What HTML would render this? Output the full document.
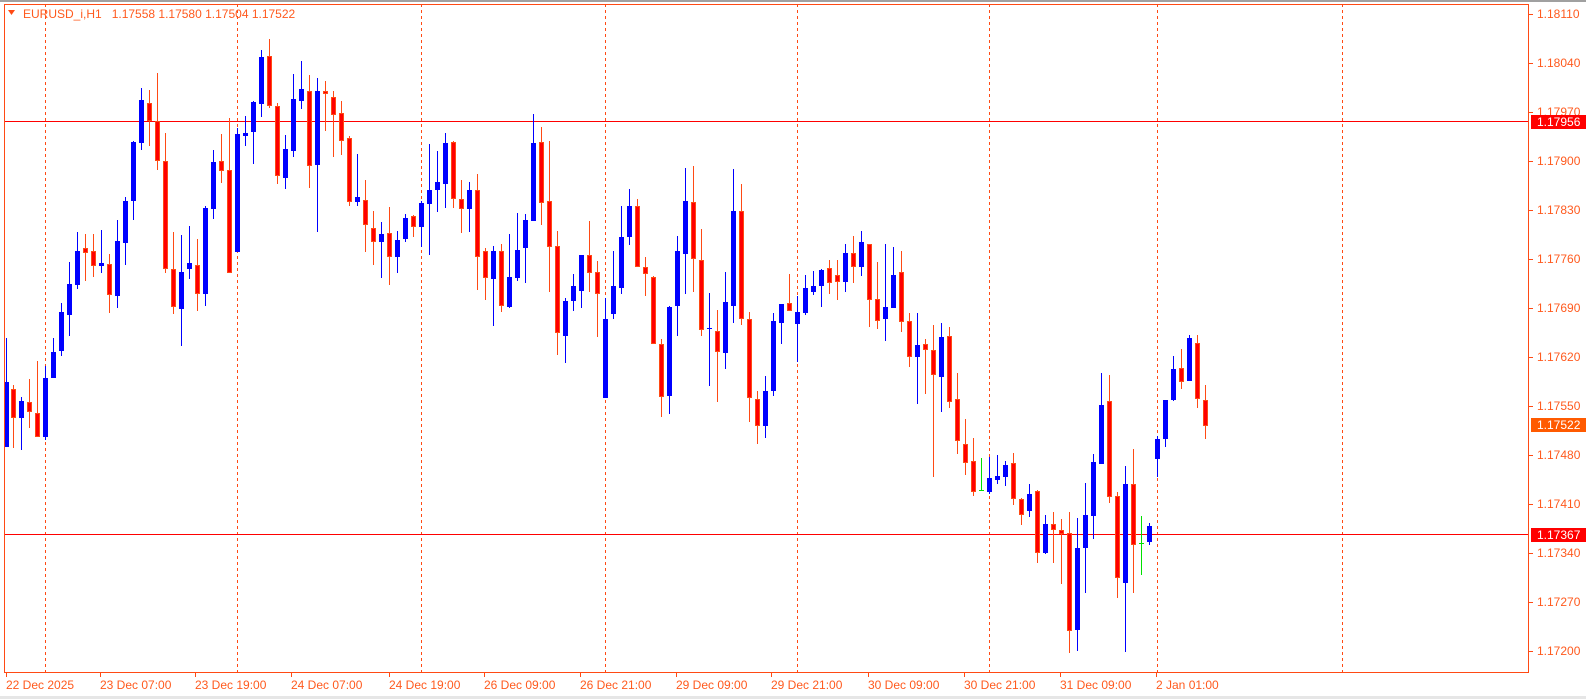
<!DOCTYPE html>
<html><head><meta charset="utf-8"><style>
html,body{margin:0;padding:0;background:#fff;width:1586px;height:699px;overflow:hidden}
svg{display:block}
text{font-family:"Liberation Sans",sans-serif;font-size:12px;fill:#ff5a1e}
</style></head><body>
<svg id="s" width="1586" height="699" xmlns="http://www.w3.org/2000/svg">
<rect x="0" y="0" width="1586" height="699" fill="#fff"/>
<rect x="0" y="0" width="1586" height="2" fill="#a0a0a0"/>
<rect x="0" y="696" width="1586" height="3" fill="#e6e6e6"/>
<g id="grid" stroke="#ff4a14" stroke-width="1" stroke-dasharray="3,3">
<line x1="45.5" y1="4" x2="45.5" y2="673"/>
<line x1="237.5" y1="4" x2="237.5" y2="673"/>
<line x1="421.5" y1="4" x2="421.5" y2="673"/>
<line x1="605.5" y1="4" x2="605.5" y2="673"/>
<line x1="797.5" y1="4" x2="797.5" y2="673"/>
<line x1="989.5" y1="4" x2="989.5" y2="673"/>
<line x1="1157.5" y1="4" x2="1157.5" y2="673"/>
<line x1="1342.5" y1="4" x2="1342.5" y2="673"/>
</g>
<line x1="4" y1="121.5" x2="1529" y2="121.5" stroke="#ff0000"/>
<line x1="4" y1="534.5" x2="1529" y2="534.5" stroke="#ff0000"/>
<g id="c"></g>
<rect x="4.5" y="4.5" width="1524" height="668" fill="none" stroke="#ff4a14"/>
<g stroke="#ff4a14" id="ticks"></g>
<path d="M8 10 L15 10 L11.5 15 Z" fill="#ff4a14"/>
<text x="23" y="18">EURUSD_i,H1&#160;&#160;&#160;1.17558&#160;1.17580&#160;1.17504&#160;1.17522</text>
<g id="pl">
<text x="1537" y="18">1.18110</text>
<text x="1537" y="67">1.18040</text>
<text x="1537" y="116">1.17970</text>
<text x="1537" y="165">1.17900</text>
<text x="1537" y="214">1.17830</text>
<text x="1537" y="263">1.17760</text>
<text x="1537" y="312">1.17690</text>
<text x="1537" y="361">1.17620</text>
<text x="1537" y="410">1.17550</text>
<text x="1537" y="459">1.17480</text>
<text x="1537" y="508">1.17410</text>
<text x="1537" y="557">1.17340</text>
<text x="1537" y="606">1.17270</text>
<text x="1537" y="655">1.17200</text>
</g>
<rect x="1531" y="115" width="55" height="14" fill="#ff0000"/>
<text x="1537" y="126" style="fill:#fff">1.17956</text>
<rect x="1531" y="418" width="55" height="14" fill="#ff5a00"/>
<text x="1537" y="429" style="fill:#fff">1.17522</text>
<rect x="1531" y="528" width="55" height="14" fill="#ff0000"/>
<text x="1537" y="539" style="fill:#fff">1.17367</text>
<g>
<text x="6" y="689">22 Dec 2025</text>
<text x="100" y="689">23 Dec 07:00</text>
<text x="195" y="689">23 Dec 19:00</text>
<text x="291" y="689">24 Dec 07:00</text>
<text x="389" y="689">24 Dec 19:00</text>
<text x="484" y="689">26 Dec 09:00</text>
<text x="580" y="689">26 Dec 21:00</text>
<text x="676" y="689">29 Dec 09:00</text>
<text x="771" y="689">29 Dec 21:00</text>
<text x="868" y="689">30 Dec 09:00</text>
<text x="964" y="689">30 Dec 21:00</text>
<text x="1060" y="689">31 Dec 09:00</text>
<text x="1156" y="689">2 Jan 01:00</text>
</g>
</svg>
<script>
var D=[
[6,'b',382,447,338,447],[13,'r',389,418,385,448],[21,'b',401,418,397,450],[29,'r',402,412,379,428],[37,'r',413,437,361,437],
[45,'b',378,437,366,440],[53,'b',352,378,338,378],[61,'b',312,351,303,356],[69,'b',284,315,262,336],[77,'b',251,285,232,289],
[85,'r',248,253,234,281],[93,'r',251,266,234,277],[101,'b',263,266,230,273],[109,'r',264,295,254,313],[117,'b',241,296,220,308],
[125,'b',201,243,197,265],[133,'b',142,201,141,220],[141,'b',100,143,88,150],[149,'r',103,121,90,146],[157,'r',121,161,73,170],
[165,'r',161,269,133,273],[173,'r',269,307,232,314],[181,'b',272,309,235,346],[189,'b',263,269,226,279],[197,'r',265,294,239,311],
[205,'b',208,294,206,306],[213,'b',162,209,150,219],[221,'r',161,171,134,183],[229,'r',170,273,118,273],[237,'b',134,252,128,252],
[245,'b',133,136,116,146],[253,'b',102,132,101,164],[261,'b',57,104,50,117],[269,'r',56,106,39,108],[277,'r',106,176,103,184],
[285,'b',149,178,135,189],[293,'b',99,151,74,157],[301,'b',89,101,61,109],[309,'r',91,166,75,188],[317,'b',91,165,78,232],
[325,'r',91,94,81,131],[333,'r',97,115,91,157],[341,'r',113,141,101,155],[349,'r',138,202,136,206],[357,'b',197,202,154,206],
[365,'r',200,225,180,252],[373,'r',228,242,211,265],[381,'b',234,242,222,278],[389,'r',233,257,207,285],[397,'b',240,257,231,273],
[405,'b',218,239,214,242],[413,'r',216,227,215,237],[421,'b',203,227,201,247],[429,'b',190,204,144,255],[437,'b',182,190,151,212],
[445,'b',143,184,133,208],[453,'r',142,199,141,208],[461,'r',199,209,180,233],[469,'b',190,209,182,232],[477,'r',190,257,174,290],
[485,'r',251,278,248,300],[493,'b',251,279,246,326],[501,'r',251,306,244,312],[509,'b',277,307,234,308],[517,'b',250,278,213,281],
[525,'b',220,248,214,283],[533,'b',143,221,114,221],[541,'r',142,203,127,225],[549,'r',201,247,141,292],[557,'r',246,333,231,355],
[565,'b',301,336,298,363],[573,'b',286,301,274,311],[581,'b',255,291,255,308],[589,'r',255,273,221,292],[597,'r',272,294,261,337],
[605,'b',319,398,298,398],[613,'b',286,314,251,319],[621,'b',237,288,206,294],[629,'b',206,237,189,245],[637,'r',206,267,199,267],
[645,'r',267,274,257,296],[653,'r',277,344,276,344],[661,'r',344,397,339,417],[669,'b',307,396,306,414],[677,'b',251,306,236,336],
[685,'b',201,254,168,294],[693,'r',202,259,166,292],[701,'r',260,330,229,336],[709,'b',328,329,293,386],[717,'r',331,352,310,402],
[725,'b',302,353,272,369],[733,'b',211,306,169,323],[741,'r',211,319,184,325],[749,'r',319,398,312,422],[757,'r',399,426,391,444],
[765,'b',391,426,376,438],[773,'b',321,391,313,396],[781,'b',304,323,304,344],[789,'r',303,311,274,311],[797,'b',312,324,296,362],
[805,'b',288,313,275,315],[813,'b',286,292,271,295],[821,'b',270,286,269,307],[829,'r',268,283,260,294],[837,'r',275,282,260,300],
[845,'b',253,282,244,292],[853,'r',253,267,236,283],[861,'b',242,267,231,276],[869,'r',244,300,244,327],[877,'r',299,321,262,329],
[885,'b',307,319,244,341],[893,'b',275,308,247,308],[901,'r',272,322,251,332],[909,'r',321,357,313,367],[917,'b',345,357,313,404],
[925,'r',344,350,339,394],[933,'r',350,375,325,477],[941,'b',337,377,323,412],[949,'r',336,402,327,408],[957,'r',399,441,373,454],
[965,'r',444,463,419,475],[973,'r',461,492,438,496],[981,'g',490,491,458,490],[989,'b',478,492,457,494],[997,'b',476,480,455,484],
[1005,'b',465,477,461,486],[1013,'r',463,499,453,505],[1021,'r',499,515,498,525],[1029,'b',494,511,484,517],[1037,'r',491,553,490,563],
[1045,'b',524,553,515,554],[1053,'r',524,530,512,563],[1061,'r',530,534,519,584],[1069,'r',533,631,512,653],[1077,'b',548,630,518,651],
[1085,'b',515,548,483,593],[1093,'b',462,516,454,539],[1101,'b',405,464,373,464],[1109,'r',401,497,375,503],[1117,'r',496,578,492,598],
[1125,'b',484,583,466,652],[1133,'r',484,545,449,593],[1141,'g',543,544,516,575],[1149,'b',526,542,523,545],[1157,'b',439,459,436,477],
[1165,'b',400,439,400,447],[1173,'b',369,400,356,401],[1181,'r',368,382,349,389],[1189,'b',338,381,335,381],[1197,'r',343,399,335,408],
[1205,'r',400,426,385,439]];
var g=document.getElementById('c'),h='';
D.forEach(function(d){var x=d[0],t=d[1];
var wc=t=='b'?'#0000ff':(t=='g'?'#00e000':'#ff4a14');
h+='<rect x="'+x+'" y="'+d[4]+'" width="1" height="'+Math.max(1,d[5]-d[4])+'" fill="'+wc+'"/>';
if(t=='b')h+='<rect x="'+(x-2)+'" y="'+d[2]+'" width="5" height="'+Math.max(1,d[3]-d[2])+'" fill="#0000ff"/>';
else if(t=='r')h+='<rect x="'+(x-1.5)+'" y="'+(d[2]+0.5)+'" width="4" height="'+Math.max(1,d[3]-d[2]-1)+'" fill="#ff0000" stroke="#ff4a14" stroke-width="1"/>';
else h+='<rect x="'+(x-2)+'" y="'+d[2]+'" width="5" height="1" fill="#00e000"/>';
});
g.innerHTML=h;
var tk='',ys=[14,63,112,161,210,259,308,357,406,455,504,553,602,651];
ys.forEach(function(y){tk+='<line x1="1529" y1="'+(y+.5)+'" x2="1533" y2="'+(y+.5)+'"/>';});
[6,100,195,291,389,484,580,676,771,868,964,1060,1156].forEach(function(x){tk+='<line x1="'+(x+.5)+'" y1="673" x2="'+(x+.5)+'" y2="677"/>';});
document.getElementById('ticks').innerHTML=tk;
</script>
</body></html>
